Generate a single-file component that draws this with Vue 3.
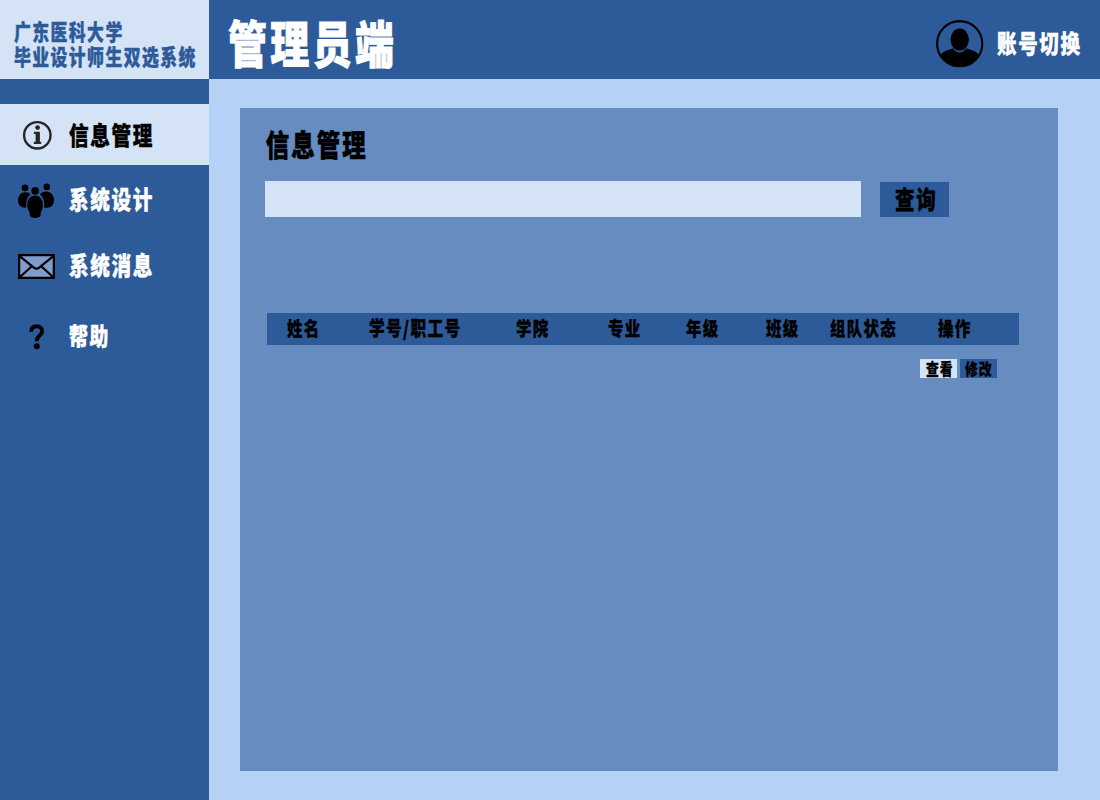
<script setup>
const menu = [
  { id: 'info', label: '信息管理' },
  { id: 'team', label: '系统设计' },
  { id: 'mail', label: '系统消息' },
  { id: 'help', label: '帮助' },
]
const columns = ['姓名', '学号/职工号', '学院', '专业', '年级', '班级', '组队状态', '操作']
</script>

<template>
  <div class="page">
    <aside class="sidebar">
      <div class="brand">
        <div class="txt">广东医科大学</div>
        <div class="txt">毕业设计师生双选系统</div>
      </div>
      <nav class="menu">
        <a v-for="item in menu" :key="item.id" class="item" :class="item.id">
          <span class="icon">
            <svg v-if="item.id === 'info'" width="30" height="30" viewBox="0 0 30 30">
              <circle cx="15.3" cy="15.3" r="13.2" fill="none" stroke="#262626" stroke-width="2.4" />
              <circle cx="15.6" cy="7.6" r="2.4" fill="#262626" />
              <path d="M11.9 11.7H17.9V21.8H19.2V24H11.8V21.8H13.6V13.9H11.9Z" fill="#262626" />
            </svg>
            <svg v-else-if="item.id === 'team'" width="36" height="36" viewBox="0 0 36 36">
              <circle cx="7" cy="4.9" r="3.3" />
              <circle cx="28.8" cy="3.9" r="3.3" />
              <circle cx="17.2" cy="7.9" r="3.8" />
              <path d="M7.5 9.2C10 9.2 11.6 10 12.5 11.5C9.5 13.5 8.5 17 8.3 20.5C8.1 23 8.2 23.8 8.4 24.6C4 25.5 0 22.5 0 17.6C0 12.5 3.2 9.2 7.5 9.2Z" />
              <path d="M28.5 8.5C32.8 8.5 36 12 36 17.3C36 22.3 32.2 26 26 24.4C26.8 19.2 25.6 13.9 21.9 11.6C23.2 9.6 25.6 8.5 28.5 8.5Z" />
              <path d="M17.2 12.6C21.6 12.6 24.9 16 24.9 22.1C24.9 25.8 24 27.5 22.7 29.2V32.3C21.8 36 12.6 36 11.7 32.3V29.2C10 27.2 9.3 25.5 9.3 22.1C9.3 16 12.6 12.6 17.2 12.6Z" />
            </svg>
            <svg v-else-if="item.id === 'mail'" width="37" height="25" viewBox="0 0 37 25">
              <rect x="1.1" y="1.1" width="34.8" height="22.8" fill="#7f9dcc" stroke="#000" stroke-width="2.3" />
              <path d="M2 2.3L15.5 13.4Q18.5 16 21.5 13.4L35 2.3M2 23L13.8 12.2M35 23L23.2 12.2" fill="none" stroke="#000" stroke-width="2.2" />
            </svg>
            <svg v-else width="16" height="26" viewBox="0 0 16 26">
              <path d="M2.1 7.7C2.2 4 4.5 2.2 7.8 2.2C11.1 2.2 13.2 4.2 13.2 7.1C13.2 11.8 7.7 11.1 7.7 17.2" fill="none" stroke="#000" stroke-width="3.9" />
              <circle cx="7.8" cy="22.3" r="3" />
            </svg>
          </span>
          <span class="txt">{{ item.label }}</span>
        </a>
      </nav>
    </aside>

    <section class="body">
      <header class="topbar">
        <h1 class="txt">管理员端</h1>
        <div class="account">
          <svg width="48" height="48" viewBox="0 0 48 48">
            <circle cx="23.7" cy="23.7" r="22.6" fill="none" stroke="#000" stroke-width="2.1" />
            <ellipse cx="23.7" cy="19.6" rx="9.2" ry="11.2" />
            <path d="M4.5 34.8Q7 31.4 12 30.1Q15 29.3 16.8 28.3Q23.7 37 30.6 28.3Q32.5 29.3 35.5 30.1Q40.5 31.4 43 34.8Q37 46.6 23.7 46.8Q10.5 46.6 4.5 34.8Z" />
          </svg>
          <span class="txt">账号切换</span>
        </div>
      </header>

      <main class="panel">
        <h2 class="txt">信息管理</h2>
        <div class="search">
          <input type="text" class="field" />
          <button class="query"><span class="txt">查询</span></button>
        </div>
        <div class="table-head">
          <div v-for="c in columns" :key="c" class="txt">{{ c }}</div>
        </div>
        <div class="actions">
          <button class="view"><span class="txt">查看</span></button>
          <button class="edit"><span class="txt">修改</span></button>
        </div>
      </main>
    </section>
  </div>
</template>

<style>
body {
  margin: 0;
}
</style>

<style scoped>
.page {
  display: flex;
  width: 1100px;
  height: 800px;
  overflow: hidden;
  background: #b5d2f6;
  color: #000;
  font-family: "Noto Sans CJK SC", sans-serif;
}
.txt {
  display: block;
  margin: 0;
  font-weight: 900;
  line-height: 1;
  letter-spacing: 0.085em;
  white-space: nowrap;
  -webkit-text-stroke: 0.018em currentColor;
  transform: scaleX(0.78);
  transform-origin: 0 50%;
}
.sidebar {
  flex: none;
  width: 209px;
  background: #2d5a98;
}
.brand {
  box-sizing: border-box;
  height: 79px;
  padding: 18px 0 0 13.5px;
  background: #d4e3f5;
  color: #2d5a98;
}
.brand .txt {
  font-size: 21.6px;
  line-height: 25px;
}
.menu {
  padding-top: 25px;
}
.item {
  display: flex;
  align-items: center;
  height: 61px;
  color: #fff;
  font-size: 25.1px;
}
.info {
  background: #d4e3f5;
  color: #000;
}
.team {
  margin-top: 5px;
}
.mail {
  margin-top: 5px;
}
.help {
  margin-top: 9px;
}
.team .txt,
.mail .txt {
  padding-bottom: 3px;
}
.help .txt {
  padding-bottom: 2px;
  font-size: 24.2px;
}
.icon {
  display: flex;
  flex: none;
  justify-content: center;
  width: 37px;
  margin: 0 14px 0 18px;
}
.team .icon {
  justify-content: flex-start;
}
.body {
  flex: none;
  width: 891px;
}
.topbar {
  display: flex;
  justify-content: space-between;
  box-sizing: border-box;
  height: 79px;
  padding-left: 19px;
  background: #2d5a98;
  color: #fff;
}
.topbar h1 {
  font-size: 50px;
  line-height: 82px;
}
.account {
  display: flex;
  gap: 13px;
  width: 164px;
  padding-top: 20px;
}
.account svg {
  flex: none;
}
.account .txt {
  font-size: 25px;
  line-height: 45px;
}
.panel {
  box-sizing: border-box;
  width: 818px;
  height: 663px;
  margin: 29px 0 0 31px;
  padding: 17px 0 0 25px;
  background: #678cbf;
}
.panel h2 {
  height: 56px;
  padding-left: 1px;
  font-size: 30.1px;
  line-height: 36px;
}
button,
input {
  border: 0;
  border-radius: 0;
  outline: 0;
  font-family: inherit;
}
button {
  padding: 0;
  color: #000;
}
.search {
  display: flex;
  align-items: flex-end;
  gap: 19px;
}
.field {
  box-sizing: border-box;
  width: 596px;
  height: 36px;
  background: #d4e3f5;
}
.query {
  width: 69px;
  height: 35px;
  padding: 0 0 2px 15px;
  background: #2d5a98;
  font-size: 25px;
}
.table-head {
  display: grid;
  grid-template-columns: 82px 147px 92px 78px 80px 64px 108px 1fr;
  box-sizing: border-box;
  width: 752px;
  height: 32px;
  margin: 96px 0 0 2px;
  padding-left: 20px;
  background: #2d5a98;
  font-size: 19.8px;
}
.table-head .txt {
  line-height: 29px;
}
.table-head .txt:nth-child(2) {
  font-size: 20.1px;
}
.actions {
  display: flex;
  gap: 3px;
  margin: 14px 0 0 655px;
}
.actions button {
  width: 37px;
  height: 19px;
  padding-left: 5px;
  font-size: 16.4px;
}
.actions .view {
  padding-left: 6px;
  background: #d4e3f5;
}
.edit {
  background: #2d5a98;
}
</style>
